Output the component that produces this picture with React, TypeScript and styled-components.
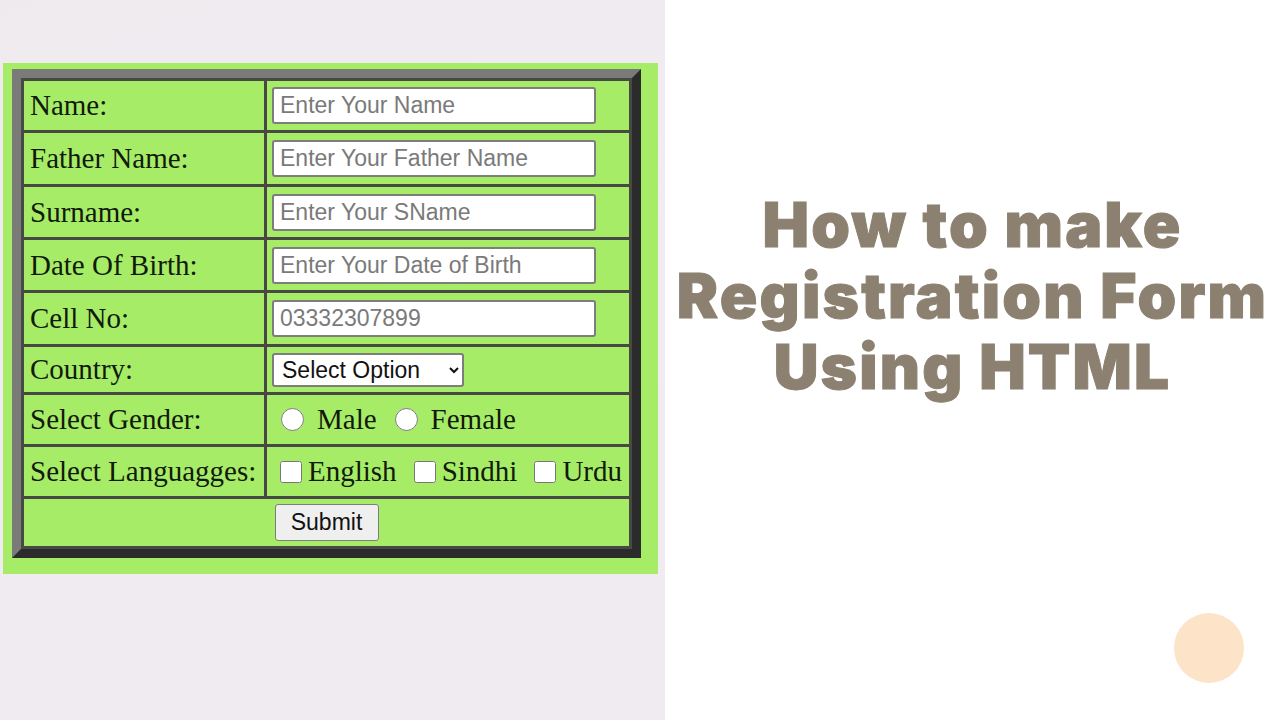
import React from "react";
import styled, { createGlobalStyle } from "styled-components";

const GlobalStyle = createGlobalStyle`
  html, body {
    margin: 0;
    padding: 0;
    width: 1280px;
    height: 720px;
    overflow: hidden;
  }
`;

const Page = styled.div`
  display: flex;
  width: 1280px;
  height: 720px;
`;

const LeftPanel = styled.div`
  width: 665px;
  height: 100%;
  background: linear-gradient(160deg, #eeeaee 0%, #f1ecf2 40%, #f0ebf0 100%);
  padding: 63px 0 0 3px;
  box-sizing: border-box;
`;

const GreenBox = styled.div`
  width: 655px;
  background: #a6ec67;
  padding: 6px 17px 16px 9px;
  box-sizing: border-box;
`;

const Frame = styled.div`
  border-style: solid;
  border-width: 9px;
  border-color: #7a7a78 #2b2b2b #2b2b2b #7a7a78;
`;

const Table = styled.table`
  width: 100%;
  border-collapse: collapse;
  font-family: "Liberation Serif", "Times New Roman", serif;
  font-size: 29px;
  color: #121a0c;
`;

const Row = styled.tr<{ $h: number }>`
  height: ${(p) => p.$h}px;
`;

const LabelCell = styled.td`
  width: 228px;
  border: 3px solid #474a44;
  padding: 0 6px;
  white-space: nowrap;
  vertical-align: middle;
  line-height: 1;
`;

const FieldCell = styled.td<{ $center?: boolean }>`
  border: 3px solid #474a44;
  padding: 0 5px;
  white-space: nowrap;
  vertical-align: middle;
  text-align: ${(p) => (p.$center ? "center" : "left")};
  line-height: 1;
`;

const TextInput = styled.input`
  display: block;
  width: 324px;
  height: 37px;
  box-sizing: border-box;
  border: 2px solid #7d7d7d;
  border-radius: 3px;
  background: #fff;
  padding: 0 6px;
  font-family: "Liberation Sans", Arial, sans-serif;
  font-size: 23px;
  color: #222;

  &::placeholder {
    color: #7a7a7a;
  }
`;

const Select = styled.select`
  display: block;
  width: 192px;
  height: 34px;
  box-sizing: border-box;
  border: 2px solid #7d7d7d;
  border-radius: 3px;
  background: #fff;
  padding: 0 4px;
  font-family: "Liberation Sans", Arial, sans-serif;
  font-size: 23px;
  color: #111;
`;

const ChoiceGroup = styled.div`
  display: flex;
  align-items: center;
  padding-left: 5px;
`;

const Choice = styled.label<{ $gap: number; $after: number }>`
  display: inline-flex;
  align-items: center;
  gap: ${(p) => p.$gap}px;
  margin-right: ${(p) => p.$after}px;
`;

const Radio = styled.input`
  width: 23px;
  height: 23px;
  margin: 0 0 0 4px;
`;

const Check = styled.input`
  width: 22px;
  height: 22px;
  margin: 0 0 0 3px;
`;

const SubmitButton = styled.button`
  width: 104px;
  height: 37px;
  border: 1px solid #7d7d7d;
  border-radius: 3px;
  background: #efefef;
  font-family: "Liberation Sans", Arial, sans-serif;
  font-size: 23px;
  color: #111;
  padding: 0;
`;

const RightPanel = styled.div`
  flex: 1;
  position: relative;
  background: #ffffff;
  display: flex;
  justify-content: center;
  padding-top: 189px;
  box-sizing: border-box;
`;

const Title = styled.h1`
  margin: 0;
  text-align: center;
  font-family: Inter, "Noto Sans", sans-serif;
  font-weight: 900;
  font-size: 62px;
  line-height: 71px;
  color: #8c8170;
  letter-spacing: 2.2px;
  -webkit-text-stroke: 1px #8c8170;
`;

const Dot = styled.div`
  position: absolute;
  left: 509px;
  top: 613px;
  width: 70px;
  height: 70px;
  border-radius: 50%;
  background: #fde4c8;
`;

const rows = [
  { label: "Name:", placeholder: "Enter Your Name", h: 52 },
  { label: "Father Name:", placeholder: "Enter Your Father Name", h: 54 },
  { label: "Surname:", placeholder: "Enter Your SName", h: 53 },
  { label: "Date Of Birth:", placeholder: "Enter Your Date of Birth", h: 53 },
  { label: "Cell No:", placeholder: "03332307899", h: 54 },
];

const App = () => {
  return (
    <>
      <GlobalStyle />
      <Page>
        <LeftPanel>
          <GreenBox>
            <Frame>
              <Table>
                <tbody>
                  {rows.map((r) => (
                    <Row $h={r.h} key={r.label}>
                      <LabelCell>{r.label}</LabelCell>
                      <FieldCell>
                        <TextInput type="text" placeholder={r.placeholder} />
                      </FieldCell>
                    </Row>
                  ))}
                  <Row $h={48}>
                    <LabelCell>Country:</LabelCell>
                    <FieldCell>
                      <Select defaultValue="">
                        <option value="">Select Option</option>
                        <option value="pk">Pakistan</option>
                        <option value="in">India</option>
                      </Select>
                    </FieldCell>
                  </Row>
                  <Row $h={52}>
                    <LabelCell>Select Gender:</LabelCell>
                    <FieldCell>
                      <ChoiceGroup>
                        <Choice $gap={13} $after={14}>
                          <Radio type="radio" name="gender" />
                          Male
                        </Choice>
                        <Choice $gap={13} $after={0}>
                          <Radio type="radio" name="gender" />
                          Female
                        </Choice>
                      </ChoiceGroup>
                    </FieldCell>
                  </Row>
                  <Row $h={52}>
                    <LabelCell>Select Languagges:</LabelCell>
                    <FieldCell>
                      <ChoiceGroup>
                        <Choice $gap={6} $after={14}>
                          <Check type="checkbox" />
                          English
                        </Choice>
                        <Choice $gap={6} $after={14}>
                          <Check type="checkbox" />
                          Sindhi
                        </Choice>
                        <Choice $gap={6} $after={0}>
                          <Check type="checkbox" />
                          Urdu
                        </Choice>
                      </ChoiceGroup>
                    </FieldCell>
                  </Row>
                  <Row $h={50}>
                    <FieldCell colSpan={2} $center>
                      <SubmitButton type="submit">Submit</SubmitButton>
                    </FieldCell>
                  </Row>
                </tbody>
              </Table>
            </Frame>
          </GreenBox>
        </LeftPanel>
        <RightPanel>
          <Title>
            How to make
            <br />
            Registration Form
            <br />
            Using HTML
          </Title>
          <Dot />
        </RightPanel>
      </Page>
    </>
  );
};

export default App;
